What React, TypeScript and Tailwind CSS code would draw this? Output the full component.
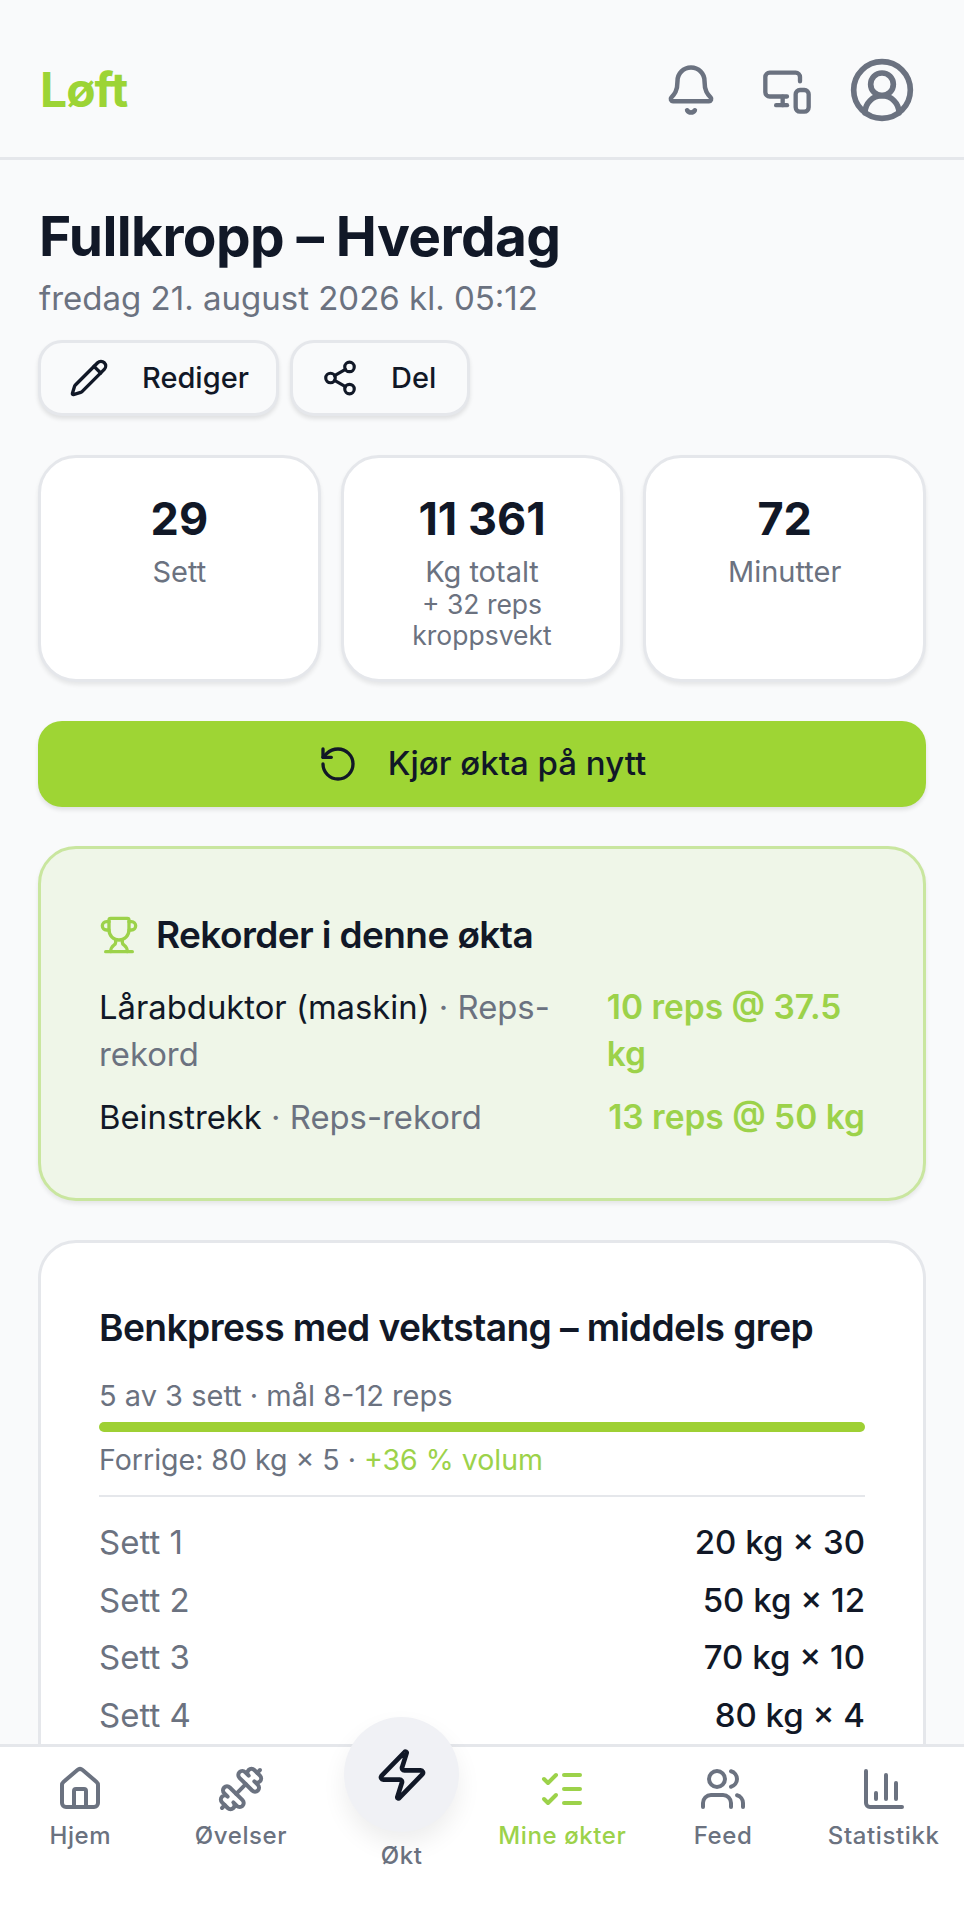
import {
  Bell,
  ChartColumn,
  CircleUserRound,
  Dumbbell,
  House,
  ListChecks,
  MonitorSmartphone,
  Pencil,
  RotateCcw,
  Share2,
  Trophy,
  Users,
  Zap,
} from "lucide-react";

const font = { fontFamily: "Inter, 'Liberation Sans', sans-serif" };

const sets = [
  ["Sett 1", "20 kg × 30"],
  ["Sett 2", "50 kg × 12"],
  ["Sett 3", "70 kg × 10"],
  ["Sett 4", "80 kg × 4"],
  ["Sett 5", "80 kg × 4"],
];

const navItems = [
  { label: "Hjem", icon: House },
  { label: "Øvelser", icon: Dumbbell },
  { label: "Mine økter", icon: ListChecks, active: true },
  { label: "Feed", icon: Users },
  { label: "Statistikk", icon: ChartColumn },
];

const NavItem = ({ label, icon: Icon, active }: { label: string; icon: typeof House; active?: boolean }) => (
  <div className={`flex flex-col items-center pt-[18px] ${active ? "text-[#9cd24a]" : "text-[#6b7280]"}`}>
    <Icon size={48} strokeWidth={2} />
    <span className="mt-[7px] text-[24px] leading-[32px] font-[450] tracking-[0.6px] whitespace-nowrap">{label}</span>
  </div>
);

const Stat = ({ value, lines }: { value: string; lines: string[] }) => (
  <div className="h-[227px] rounded-[38px] bg-white border-[3px] border-[#e5e7eb] shadow-[0_3px_4px_rgba(0,0,0,0.08)] flex flex-col items-center pt-[36px]">
    <span className="text-[45px] leading-[50px] font-bold text-[#111827]">{value}</span>
    <span className="mt-[11px] text-[29px] leading-[34px] text-[#6b7280]">{lines[0]}</span>
    {lines.slice(1).map((l) => (
      <span key={l} className="text-[26.5px] leading-[31px] text-[#6b7280]">
        {l}
      </span>
    ))}
  </div>
);

export default function App() {
  return (
    <div style={font} className="relative w-[964px] h-[1920px] overflow-hidden bg-[#f9fafb] text-[#111827]">
      <header className="h-[160px] border-b-[3px] border-[#e5e7eb] flex items-center justify-between pl-[40px] pr-[48px] pt-[22px]">
        <span className="text-[48px] leading-none font-bold tracking-[-1px] text-[#9cd435]">Løft</span>
        <div className="flex items-center text-[#6b7280]">
          <Bell size={54} strokeWidth={2} />
          <MonitorSmartphone size={52} strokeWidth={2} className="ml-[43px]" />
          <CircleUserRound size={68} strokeWidth={2} className="ml-[35px]" />
        </div>
      </header>

      <main className="px-[38px] pt-[46px]">
        <h1 className="ml-[1px] text-[55px] leading-[60px] font-bold tracking-[-0.6px]">Fullkropp – Hverdag</h1>
        <p className="ml-[1px] mt-[10px] text-[33px] leading-[44px] text-[#6b7280]">fredag 21. august 2026 kl. 05:12</p>

        <div className="mt-[20px] flex gap-[11px]">
          <button className="h-[76px] w-[241px] rounded-[24px] bg-[#f9fafb] border-[3px] border-[#e5e7eb] shadow-[0_3px_4px_rgba(0,0,0,0.1)] flex items-center pl-[28px] text-[29px] font-medium">
            <Pencil size={40} strokeWidth={2} />
            <span className="ml-[33px]">Rediger</span>
          </button>
          <button className="h-[76px] w-[180px] rounded-[24px] bg-[#f9fafb] border-[3px] border-[#e5e7eb] shadow-[0_3px_4px_rgba(0,0,0,0.1)] flex items-center pl-[28px] text-[29px] font-medium">
            <Share2 size={38} strokeWidth={2} />
            <span className="ml-[32px]">Del</span>
          </button>
        </div>

        <div className="mt-[39px] grid grid-cols-3 gap-[20px]">
          <Stat value="29" lines={["Sett"]} />
          <Stat value="11 361" lines={["Kg totalt", "+ 32 reps", "kroppsvekt"]} />
          <Stat value="72" lines={["Minutter"]} />
        </div>

        <button className="mt-[39px] w-full h-[86px] rounded-[24px] bg-[#9ed534] shadow-[0_3px_4px_rgba(0,0,0,0.1)] flex items-center justify-center text-[33px] font-medium text-[#111827]">
          <RotateCcw size={40} strokeWidth={2} />
          <span className="ml-[30px]">Kjør økta på nytt</span>
        </button>

        <section className="mt-[39px] h-[355px] rounded-[38px] bg-[#eff6e8] border-[3px] border-[#c9e69f] shadow-[0_3px_4px_rgba(0,0,0,0.08)] px-[58px] pt-[63px]">
          <div className="flex items-center">
            <Trophy size={40} strokeWidth={2} className="text-[#9cd24a]" />
            <h2 className="ml-[17px] text-[37px] leading-[46px] font-semibold tracking-[-0.6px]">Rekorder i denne økta</h2>
          </div>
          <div className="mt-[26px] flex justify-between gap-[40px] text-[32.8px] leading-[47px]">
            <p className="w-[480px]">
              Lårabduktor (maskin) <span className="text-[#6b7280]">· Reps-rekord</span>
            </p>
            <p className="w-[265px] text-[33.5px] font-semibold text-[#9cd24a]">10 reps @ 37.5 kg</p>
          </div>
          <div className="mt-[16px] flex justify-between text-[32.8px] leading-[47px]">
            <p>
              Beinstrekk <span className="text-[#6b7280]">· Reps-rekord</span>
            </p>
            <p className="text-[33.5px] font-semibold text-[#9cd24a]">13 reps @ 50 kg</p>
          </div>
        </section>

        <section className="mt-[39px] rounded-[38px] bg-white border-[3px] border-[#e5e7eb] px-[58px] pt-[62px] pb-[60px]">
          <h2 className="text-[37.2px] leading-[46px] font-semibold tracking-[-0.6px]">Benkpress med vektstang – middels grep</h2>
          <p className="mt-[27px] text-[29px] leading-[36px] text-[#6b7280]">5 av 3 sett · mål 8-12 reps</p>
          <div className="mt-[8px] h-[10px] rounded-full bg-[#9ed034]" />
          <p className="mt-[6px] text-[28.5px] leading-[44px] text-[#6b7280]">
            Forrige: 80 kg × 5 · <span className="text-[#9cd24a]">+36 % volum</span>
          </p>
          <div className="mt-[13px] h-[2px] bg-[#e5e7eb]" />
          <div className="mt-[25px] flex flex-col gap-[16.5px]">
            {sets.map(([name, val]) => (
              <div key={name} className="flex justify-between text-[33px] leading-[41px]">
                <span className="text-[#6b7280]">{name}</span>
                <span className="font-[450]">{val}</span>
              </div>
            ))}
          </div>
        </section>
      </main>

      {/* bunnmeny ligger over innholdet */}
      <nav className="absolute left-0 right-0 bottom-0 h-[176px] bg-white border-t-[3px] border-[#e5e7eb] grid grid-cols-6">
        <NavItem {...navItems[0]} />
        <NavItem {...navItems[1]} />
        <div className="relative flex flex-col items-center">
          <div className="absolute top-[-30px] w-[115px] h-[115px] rounded-full bg-[#f0f1f5] shadow-[0_12px_24px_rgba(0,0,0,0.07)] flex items-center justify-center text-[#111827]">
            <Zap size={56} strokeWidth={2} />
          </div>
          <span className="mt-[93px] text-[24px] leading-[32px] font-[450] tracking-[0.6px] text-[#6b7280]">Økt</span>
        </div>
        <NavItem {...navItems[2]} />
        <NavItem {...navItems[3]} />
        <NavItem {...navItems[4]} />
      </nav>
    </div>
  );
}
